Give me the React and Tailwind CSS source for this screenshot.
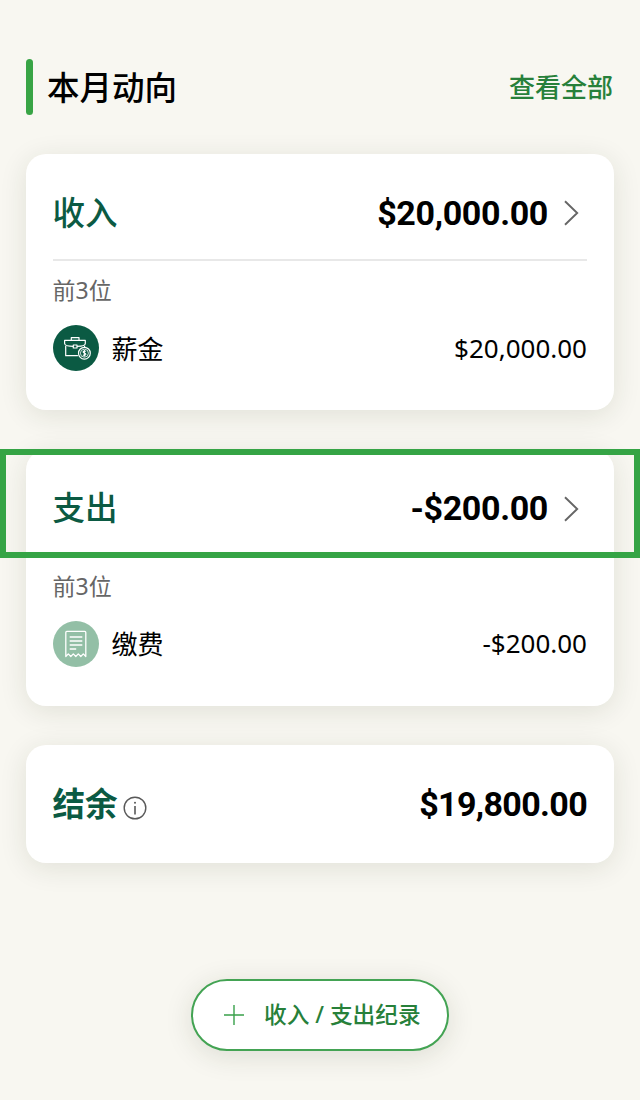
// Arrow on the right of a card header
function ChevronIcon() {
  return (
    <svg width="15" height="26" viewBox="0 0 15 26" fill="none" stroke="#666" strokeWidth="1.9">
      <path d="M1 1.2 13.2 13 1 24.8" />
    </svg>
  );
}

function SalaryIcon() {
  return (
    <svg width="46" height="46" viewBox="0 0 46 46" fill="none" stroke="#fff" strokeWidth="1.2" strokeLinejoin="round">
      <circle cx="23" cy="23" r="23" fill="#0b5a43" stroke="none" />
      <path d="M18.3 15.2v-2.6h7.7v2.6" />
      <path d="M20.3 21.4C16 21.4 11.6 20.4 11.6 18.6v-3.2h20.7v3.2c0 1.8-4 2.8-8.3 2.8" />
      <path d="M20.3 20h3.7v3h-3.7z" />
      <path d="M12.7 20.8v9.9h12.2M31.6 20.8v1.2" />
      <circle cx="31.4" cy="28.2" r="5.9" />
      <circle cx="31.4" cy="28.2" r="4" strokeWidth="0.8" />
      <path d="M32.9 26.4c-.6-.6-2.8-.7-2.8.5 0 1.4 2.8 1 2.8 2.4 0 1.3-2.3 1.2-3 .5M31.4 25v6.4" strokeWidth="1.1" />
    </svg>
  );
}

function BillIcon() {
  return (
    <svg width="46" height="46" viewBox="0 0 46 46" fill="none" stroke="#fff" strokeWidth="1.3" strokeLinejoin="round">
      <circle cx="23" cy="23" r="23" fill="#93bfa6" stroke="none" />
      <path d="M12.8 35.5V11.4q0-1 1-1h18q1 0 1 1v24.1l-2.5-2.6-2.5 2.6-2.5-2.6-2.5 2.6-2.5-2.6-2.5 2.6-2.5-2.6z" />
      <path d="M16.7 16h12.6M16.7 20h12.6M16.7 24h12.6M16.7 28h6.5" />
    </svg>
  );
}

function InfoIcon() {
  return (
    <svg width="24" height="24" viewBox="0 0 24 24" fill="none" stroke="#595959" strokeWidth="1.4">
      <circle cx="12" cy="12" r="10.8" />
      <path d="M12 10v8.4" strokeWidth="1.6" />
      <circle cx="12" cy="6.8" r="1" fill="#595959" stroke="none" />
    </svg>
  );
}

const cards = [
  { id: "income", title: "收入", total: "$20,000.00", item: "薪金", amount: "$20,000.00", icon: <SalaryIcon /> },
  { id: "expense", title: "支出", total: "-$200.00", item: "缴费", amount: "-$200.00", icon: <BillIcon />, active: true },
];

export default function App() {
  return (
    <div className="flex h-[1100px] w-[640px] flex-col overflow-hidden bg-[#f8f7f1] pt-[59px] font-['Noto_Sans','Noto_Sans_CJK_SC',sans-serif] text-black">
      <header className="flex h-14 items-center justify-between px-[26px]">
        <div className="flex items-center gap-[14px]">
          <span className="h-14 w-[7px] rounded-full bg-[#38a445]" />
          <h1 className="pb-[3px] font-['Noto_Sans_CJK_SC',sans-serif] text-[32.5px] leading-[53px] font-medium">本月动向</h1>
        </div>
        <a className="pr-px pb-[3px] font-['Noto_Sans_CJK_SC',sans-serif] text-[26px] font-medium text-[#27803a]">查看全部</a>
      </header>

      <main className="mt-[39px] flex flex-col gap-[39.5px] pr-[26.5px] pl-[26px]">
        {cards.map((card) => (
          <section
            key={card.id}
            className="relative h-64 rounded-[20px] bg-white px-[26.5px] shadow-[0_5px_28px_rgba(40,50,20,0.11)]"
          >
            <div className="flex h-[107px] items-center justify-between border-b-2 border-[#e8e8e8] pt-3">
              <h2 className="pb-[3px] font-['Noto_Sans_CJK_SC',sans-serif] text-[32.5px] font-medium text-[#0b5a43]">{card.title}</h2>
              <div className="flex items-center gap-4 pt-px pr-2">
                <span className="font-[Roboto,sans-serif] text-[34px] font-bold tracking-[-0.35px]">{card.total}</span>
                <ChevronIcon />
              </div>
            </div>
            <p className="mt-[12px] text-[23px] leading-[34px] text-[#666]">前3位</p>
            <div className="mt-[18px] flex h-[46px] items-center">
              {card.icon}
              <span className="ml-[13px] pt-0.5 text-[26px]">{card.item}</span>
              <span className="ml-auto text-[26px]">{card.amount}</span>
            </div>
            {/* highlight frame over the card header */}
            {card.active && (
              <div className="absolute -top-[0.5px] -left-[26px] h-[109px] w-[640px] border-6 border-[#35a445]" />
            )}
          </section>
        ))}

        <section className="flex h-[118px] items-center justify-between rounded-[20px] bg-white px-[26.5px] shadow-[0_5px_28px_rgba(40,50,20,0.11)]">
          <div className="flex items-center gap-[5px]">
            <h2 className="pb-[3px] font-['Noto_Sans_CJK_SC',sans-serif] text-[32.5px] font-bold text-[#0b5a43]">结余</h2>
            <span className="mt-[7px]">
              <InfoIcon />
            </span>
          </div>
          <span className="font-[Roboto,sans-serif] text-[34px] font-bold tracking-[-0.65px]">$19,800.00</span>
        </section>
      </main>

      <button className="mt-[116px] flex h-[72px] w-[258px] items-center self-center rounded-full border-2 border-[#43a353] bg-white pl-[31px] text-[22.7px] font-medium text-[#27803a] shadow-[0_5px_28px_rgba(40,50,20,0.13)]">
        <svg width="20" height="20" viewBox="0 0 20 20" fill="none" stroke="#38a04a" strokeWidth="1.4">
          <path d="M10 0v20M0 10h20" />
        </svg>
        <span className="ml-5 whitespace-nowrap">收入 / 支出纪录</span>
      </button>
    </div>
  );
}
